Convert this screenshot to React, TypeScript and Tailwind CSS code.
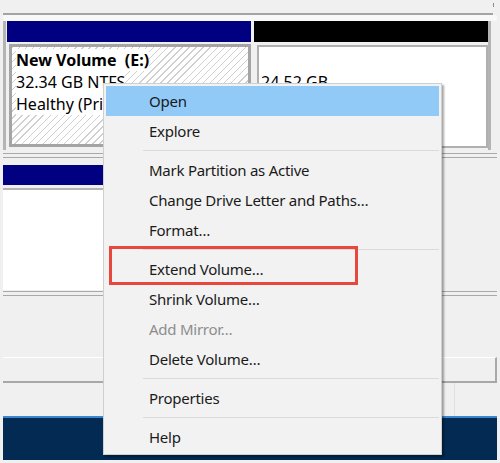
const menuItems: ({ label: string; disabled?: boolean; active?: boolean } | "sep")[] = [
  { label: "Open", active: true },
  { label: "Explore" },
  "sep",
  { label: "Mark Partition as Active" },
  { label: "Change Drive Letter and Paths…" },
  { label: "Format…" },
  "sep",
  { label: "Extend Volume…" },
  { label: "Shrink Volume…" },
  { label: "Add Mirror…", disabled: true },
  { label: "Delete Volume…" },
  "sep",
  { label: "Properties" },
  "sep",
  { label: "Help" },
];

const ContextMenu = () => (
  <div className="absolute left-[103px] top-[83px] w-[339px] border border-[#cfcfcf] bg-[#f2f2f2] p-[2px] shadow-[2px_2px_2px_rgba(0,0,0,0.35)]">
    {menuItems.map((item, i) =>
      item === "sep" ? (
        <div key={i} className="flex h-[9px] items-center pl-[37px]">
          <div className="h-px w-full bg-[#dadada]" />
        </div>
      ) : (
        <div
          key={i}
          className={`flex h-[30px] items-center pl-[43px] text-[15px] tracking-[-0.25px] ${
            item.active ? "bg-[#91c9f7]" : ""
          } ${item.disabled ? "text-[#8d8d8d]" : "text-[#1a1a1a]"}`}
        >
          {item.label}
        </div>
      )
    )}
    {/* highlight round Extend Volume */}
    <div className="absolute left-[5px] top-[162px] h-[39px] w-[249px] border-[3px] border-[#e8473d]" />
  </div>
);

export default function App() {
  return (
    <div className="relative h-[463px] w-[500px] overflow-hidden bg-[#f0f0f0] font-['Noto_Sans',sans-serif]">
      <div className="flex h-full flex-col pl-[3px] pr-[3px]">
        {/* top edge */}
        <div className="flex h-[13px] justify-end pr-[3px]">
          <div className="mt-[3px] h-[4px] w-px bg-[#8a8a8a]" />
        </div>
        <div className="mr-[4px] h-[2px] bg-[#a3a3a3]" />
        <div className="h-[6px] bg-[#f8f8f8]" />

        {/* disk row 1 */}
        <div className="flex h-[129px]">
          <div className="flex w-[248px] flex-col border-l-[3px] border-[#b4b4b4]">
            <div className="ml-px h-[21px] bg-[#000080]" />
            <div className="ml-[3px] mt-[2px] h-[103px] overflow-hidden border-[3px] border-[#a4a4a4] bg-[repeating-linear-gradient(135deg,#cfcfcf_0px,#cfcfcf_1px,#ffffff_1px,#ffffff_5px)] pl-[4px] pt-[2px] text-[16px] leading-[22px] text-black">
              <div>
                <span className="whitespace-pre bg-white font-bold">New Volume  (E:)</span>
              </div>
              <div>
                <span className="whitespace-nowrap bg-white">32.34 GB NTFS</span>
              </div>
              <div>
                <span className="whitespace-nowrap bg-white">Healthy (Primary Partition)</span>
              </div>
            </div>
          </div>
          <div className="ml-[3px] flex w-[237px] flex-col border-r-[3px] border-[#b4b4b4]">
            <div className="h-[21px] bg-black" />
            <div className="ml-[3px] mt-[3px] h-[103px] overflow-hidden border-2 border-[#b0b0b0] bg-white pl-[2px] pt-[2px] text-[16px] leading-[22px] text-black">
              <div className="h-[22px]" />
              <div>24.52 GB</div>
              <div>Unallocated</div>
            </div>
          </div>
        </div>

        {/* separator */}
        <div className="flex h-[15px] flex-col pt-[3px]">
          <div className="h-px bg-[#a9a9a9]" />
          <div className="mt-[3px] h-px bg-[#a9a9a9]" />
        </div>

        {/* disk row 2 */}
        <div className="flex h-[125px] w-[430px] flex-col">
          <div className="h-[20px] bg-[#000080]" />
          <div className="mt-[3px] h-[2px] bg-[#b4b4b4]" />
          <div className="h-[100px] bg-white" />
        </div>
        <div className="flex h-[10px] flex-col pt-[1px]">
          <div className="h-px bg-[#a9a9a9]" />
          <div className="mt-[3px] h-px bg-[#a9a9a9]" />
        </div>

        <div className="h-[57px]" />
        {/* raised band */}
        <div className="h-[26px] border-r-2 border-b-2 border-t border-[#a8a8a8] border-t-white" />
        {/* status strip */}
        <div className="flex h-[33px]">
          <div className="ml-[451px] w-px bg-[#e2e2e2]" />
        </div>
        {/* navy taskbar */}
        <div className="h-[44px] border-t-2 border-[#3a86cf] bg-[#032a52]" />
      </div>

      <ContextMenu />
    </div>
  );
}
